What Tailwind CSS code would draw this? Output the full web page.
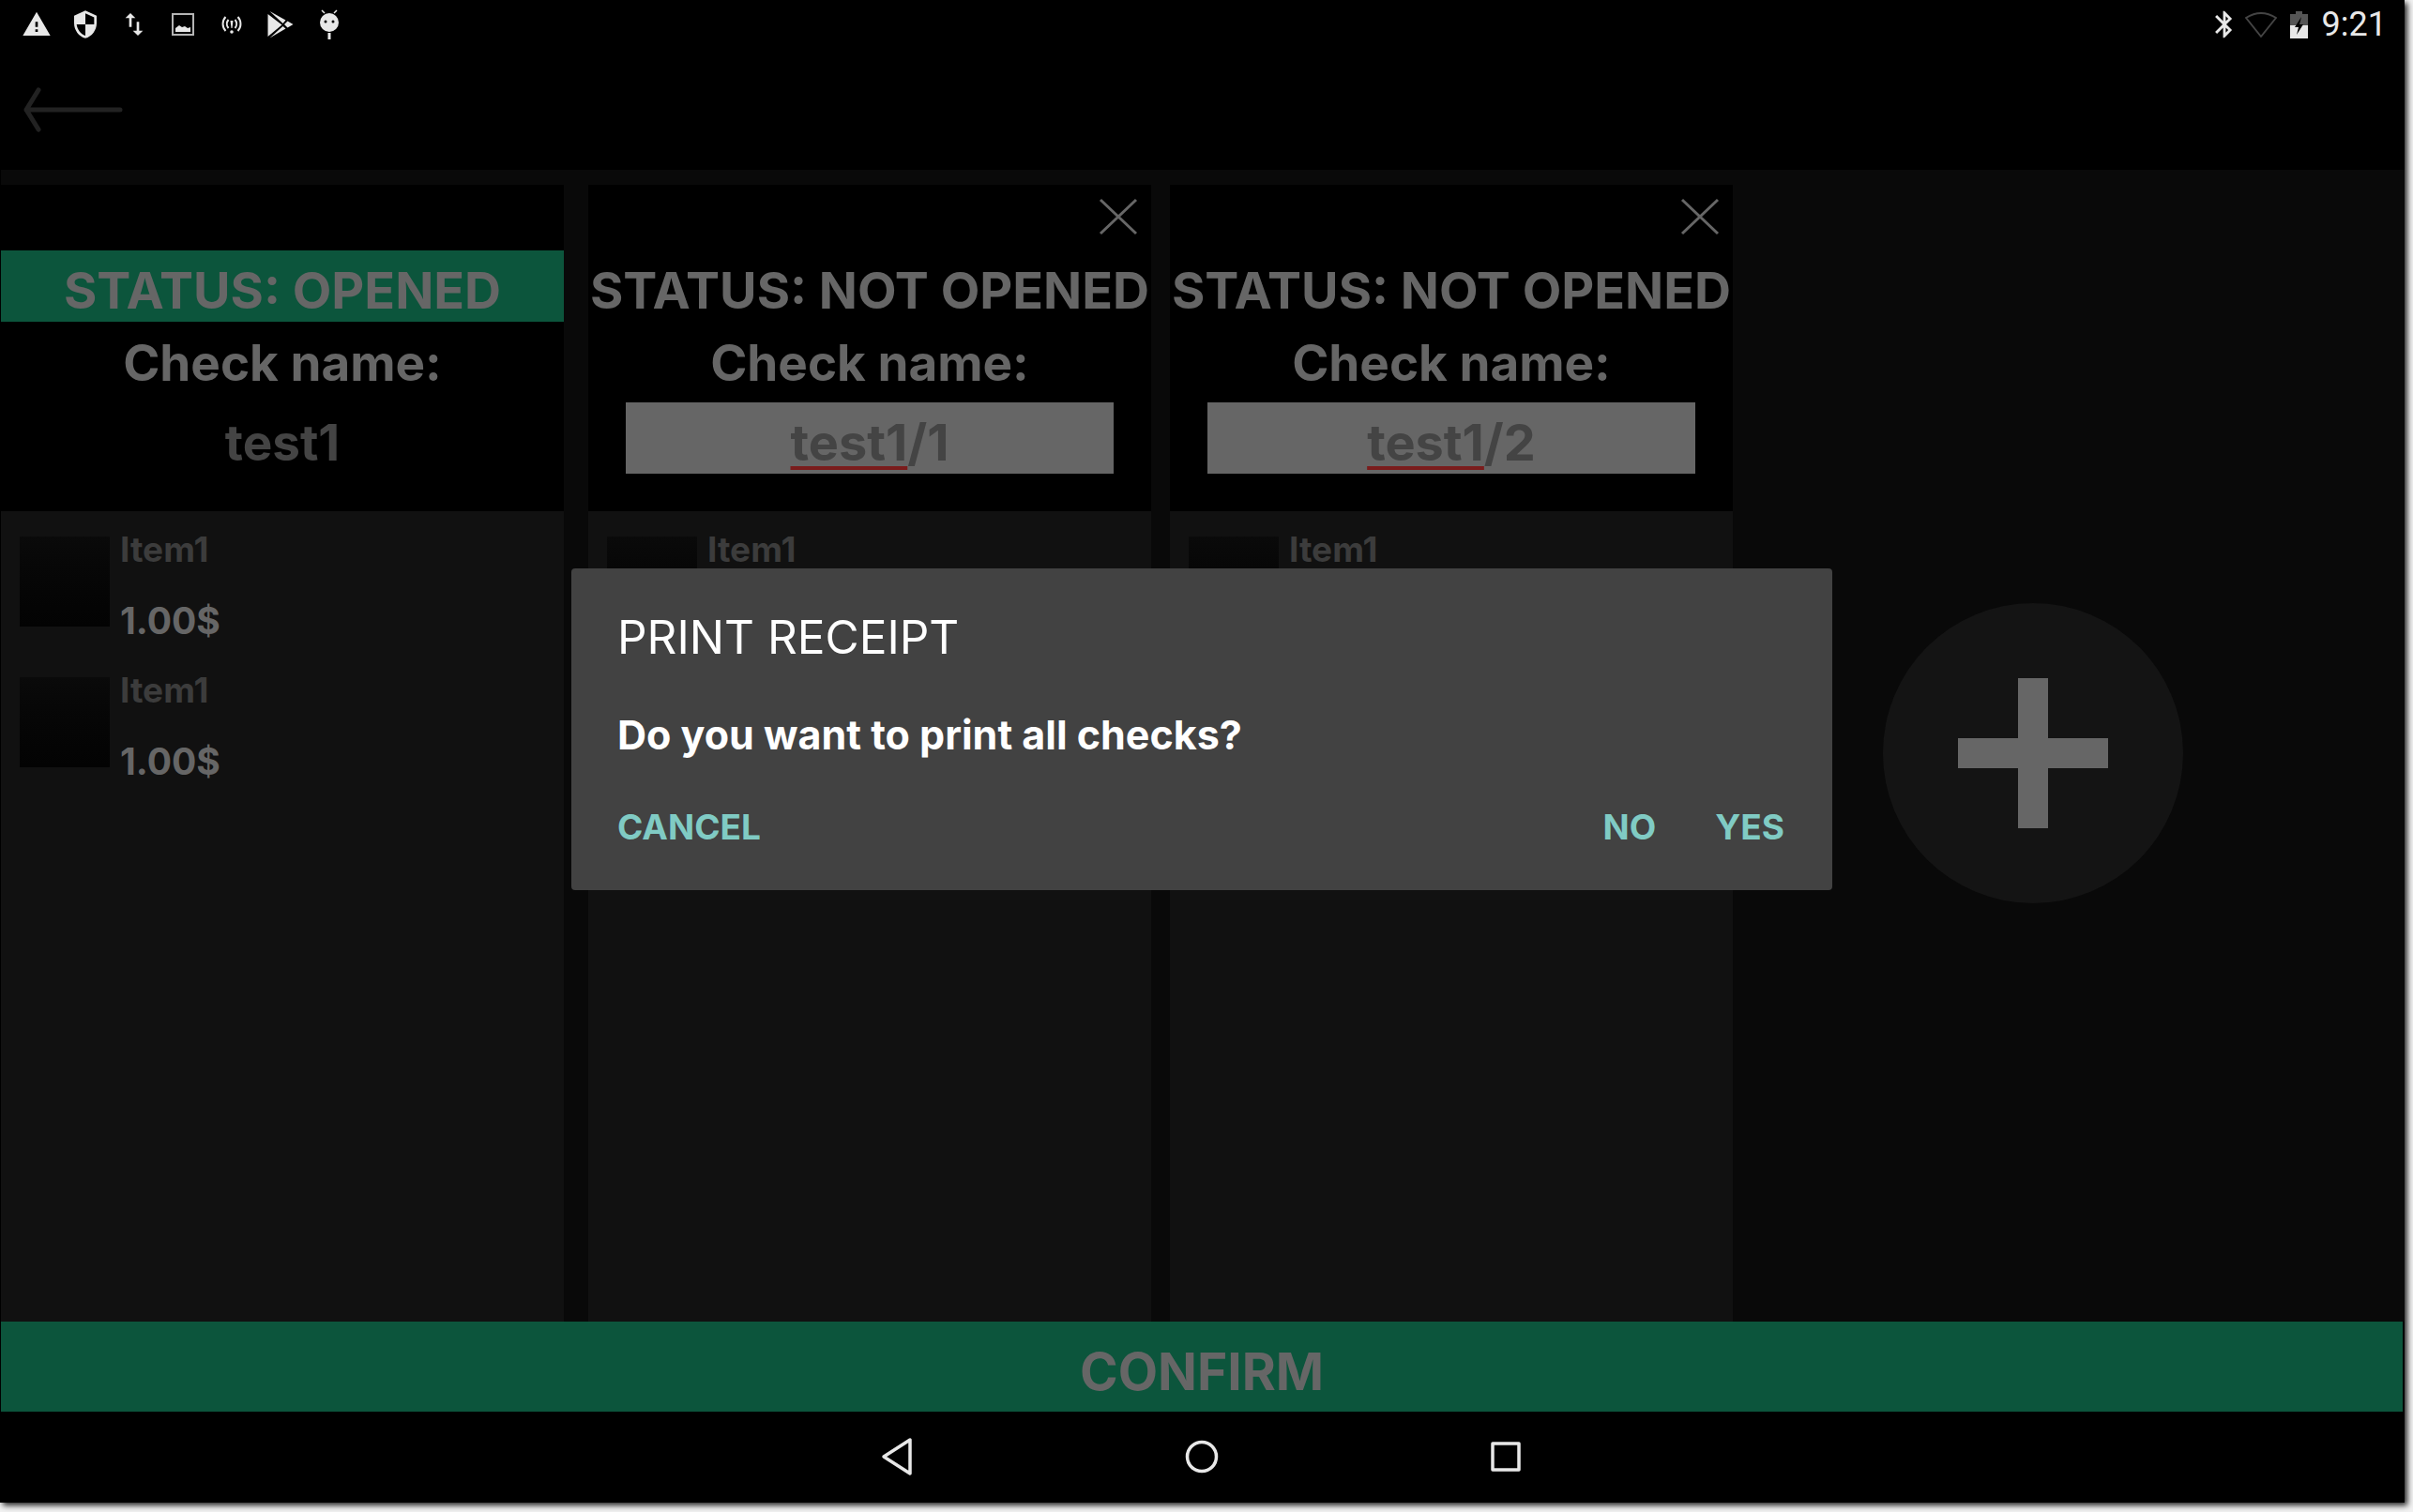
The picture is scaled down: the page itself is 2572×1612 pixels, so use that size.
<!DOCTYPE html>
<html lang="en">
<head>
  <meta charset="UTF-8" />
  <title>Split check</title>
  <script src="https://cdn.jsdelivr.net/npm/@tailwindcss/browser@4"></script>
</head>
<body class="bg-[#f2f2f2] w-[2572px] h-[1612px] overflow-hidden font-['Inter',sans-serif]">
  <div class="relative w-[2563px] h-[1602px] bg-black flex flex-col shadow-[3px_3px_6px_rgba(0,0,0,0.85)]">

    <!-- status bar -->
    <div class="h-[52px] shrink-0 flex items-center justify-between pl-[23px] pr-[19px]">
      <div class="flex items-center gap-[20px]">
        <svg class="w-[32px] h-[32px]" viewBox="0 0 24 24" fill="#e8e8e8"><path fill-rule="evenodd" d="M1 21h22L12 2 1 21zm12-3h-2v-2h2v2zm0-4h-2v-4h2v4z"/></svg>
        <svg class="w-[32px] h-[32px]" viewBox="0 0 24 24" fill="#e8e8e8"><path transform="translate(24 0) scale(-1 1)" d="M12 1L3 5v6c0 5.55 3.84 10.74 9 12 5.16-1.26 9-6.45 9-12V5l-9-4zm0 10.99h7c-.53 4.12-3.28 7.79-7 8.94V12H5V6.3l7-3.11v8.8z"/></svg>
        <svg class="w-[32px] h-[32px]" viewBox="0 0 24 24" fill="#e8e8e8"><path d="M16 17.01V10h-2v7.01h-3L15 21l4-3.99h-3zM9 3L5 6.99h3V14h2V6.99h3L9 3z"/></svg>
        <svg class="w-[32px] h-[32px]" viewBox="0 0 32 32"><rect x="5" y="5" width="22" height="22" fill="none" stroke="#b4b4b4" stroke-width="2"/><path d="M8 24v-4l4-3 3 2 3-1 3 2 3-1v5z" fill="#e8e8e8"/></svg>
        <svg class="w-[32px] h-[32px]" viewBox="0 0 32 32" fill="none" stroke="#e8e8e8" stroke-width="2"><path d="M9.500 8a11 11 0 0 0 0 15M22.500 8a11 11 0 0 1 0 15M12.500 11a7 7 0 0 0 0 9M19.500 11a7 7 0 0 1 0 9"/><path d="M14.500 12h3l-1 8h-1z" fill="#e8e8e8" stroke="none"/><circle cx="16" cy="24" r="1.800" fill="#e8e8e8" stroke="none"/></svg>
        <svg class="w-[32px] h-[32px]" viewBox="-2.500 -2 32 32" fill="#e8e8e8"><path d="M0 3V27L15 14.500z"/><path d="M2 0L19 9.500 16 13z"/><path d="M21 10.500L27 14 21 17.500 17.500 14z"/><path d="M2 28.500L16 16 19 18.500z"/></svg>
        <svg class="w-[32px] h-[32px]" viewBox="0 0 32 32"><circle cx="16" cy="14" r="10" fill="#e8e8e8"/><circle cx="12" cy="13" r="1.500" fill="#000"/><circle cx="20" cy="13" r="1.500" fill="#000"/><path d="M8 1l3 3M24 1l-3 3" stroke="#e8e8e8" stroke-width="1.500"/><rect x="14.500" y="25" width="3" height="7" fill="#e8e8e8"/></svg>
      </div>
      <div class="flex items-center">
        <svg class="w-[34px] h-[34px]" viewBox="0 0 24 24" fill="#e8e8e8"><path d="M17.710 7.710L12 2h-1v7.590L6.410 5 5 6.410 10.590 12 5 17.590 6.410 19 11 14.410V22h1l5.710-5.710-4.300-4.290 4.300-4.290zM13 5.830l1.880 1.880L13 9.590V5.830zm1.880 10.460L13 18.170v-3.760l1.880 1.880z"/></svg>
        <svg class="ml-[4px] w-[36px] h-[29px]" viewBox="0 0 36 29" fill="none" stroke="#444" stroke-width="2"><path d="M2 7Q18 -3 34 7L18 27z" stroke-linejoin="round"/></svg>
        <svg class="ml-[13px] w-[19px] h-[29px]" viewBox="0 0 19 29"><path d="M6 0h7v3h6v12H0V3h6z" fill="#555"/><path d="M0 15h19v14H0z" fill="#e8e8e8"/><path d="M12 6L5 17h4l-2 8 7-11h-4z" fill="#000"/></svg>
        <span class="ml-[15px] font-['Roboto',sans-serif] text-[36px] leading-none text-[#e8e8e8]">9:21</span>
      </div>
    </div>

    <!-- toolbar -->
    <div class="h-[129px] shrink-0 pl-[25px] pt-[41px]">
      <svg class="w-[106px] h-[48px]" viewBox="0 0 106 48" fill="none" stroke="#222" stroke-width="5" stroke-linecap="round" stroke-linejoin="round"><path d="M103 24H3M16 3L3 24 16 45"/></svg>
    </div>

    <!-- checks -->
    <div class="flex-1 min-h-0 ml-px bg-[#090909] pt-[16px] flex">
      <div class="w-[600px] flex flex-col">
        <div class="relative h-[348px] shrink-0 bg-black flex flex-col items-center pt-[70px] text-[#666] font-bold text-[53px] leading-[64px]">
          <div class="w-full h-[76px] shrink-0 bg-[#0c553c] pt-[10px] flex items-center justify-center text-[54px] whitespace-nowrap">STATUS: OPENED</div>
          <div class="h-[86px] shrink-0 pt-[2px] flex items-center">Check name:</div>
          <div class="w-[520px] h-[76px] shrink-0 pt-[10px] flex items-center justify-center text-[#444]">test1</div>
        </div>
        <div class="flex-1 bg-[#111] pt-[27px] pl-[20px]">
          <div class="h-[150px] flex gap-[11px]">
            <div class="w-[96px] h-[96px] bg-gradient-to-b from-[#0a0a0a] to-[#030303]"></div>
            <div class="font-bold -mt-[6px]">
              <div class="h-[76px] text-[37px] leading-[40px] text-[#3c3c3c]">Item1</div>
              <div class="text-[39px] leading-[40px] text-[#666]">1.00$</div>
            </div>
          </div>
          <div class="h-[150px] flex gap-[11px]">
            <div class="w-[96px] h-[96px] bg-gradient-to-b from-[#0a0a0a] to-[#030303]"></div>
            <div class="font-bold -mt-[6px]">
              <div class="h-[76px] text-[37px] leading-[40px] text-[#3c3c3c]">Item1</div>
              <div class="text-[39px] leading-[40px] text-[#666]">1.00$</div>
            </div>
          </div>
        </div>
      </div>

      <div class="ml-[26px] w-[600px] flex flex-col">
        <div class="relative h-[348px] shrink-0 bg-black flex flex-col items-center pt-[70px] text-[#666] font-bold text-[53px] leading-[64px]">
          <svg class="absolute right-[14px] top-[14px] w-[42px] h-[40px]" viewBox="0 0 42 40" stroke="#666" stroke-width="3"><path d="M2 2L40 38M40 2L2 38"/></svg>
          <div class="w-full h-[76px] shrink-0 pt-[10px] flex items-center justify-center text-[54px] whitespace-nowrap">STATUS: NOT OPENED</div>
          <div class="h-[86px] shrink-0 pt-[2px] flex items-center">Check name:</div>
          <div class="w-[520px] h-[76px] shrink-0 bg-[#666] pt-[10px] flex items-center justify-center text-[54px] text-[#444]"><span><span class="underline decoration-[#7a1c1c] decoration-[4px] underline-offset-[6px]">test1</span>/1</span></div>
        </div>
        <div class="flex-1 bg-[#111] pt-[27px] pl-[20px]">
          <div class="h-[150px] flex gap-[11px]">
            <div class="w-[96px] h-[96px] bg-gradient-to-b from-[#0a0a0a] to-[#030303]"></div>
            <div class="font-bold -mt-[6px]">
              <div class="h-[76px] text-[37px] leading-[40px] text-[#3c3c3c]">Item1</div>
              <div class="text-[39px] leading-[40px] text-[#666]">1.00$</div>
            </div>
          </div>
        </div>
      </div>

      <div class="ml-[20px] w-[600px] flex flex-col">
        <div class="relative h-[348px] shrink-0 bg-black flex flex-col items-center pt-[70px] text-[#666] font-bold text-[53px] leading-[64px]">
          <svg class="absolute right-[14px] top-[14px] w-[42px] h-[40px]" viewBox="0 0 42 40" stroke="#666" stroke-width="3"><path d="M2 2L40 38M40 2L2 38"/></svg>
          <div class="w-full h-[76px] shrink-0 pt-[10px] flex items-center justify-center text-[54px] whitespace-nowrap">STATUS: NOT OPENED</div>
          <div class="h-[86px] shrink-0 pt-[2px] flex items-center">Check name:</div>
          <div class="w-[520px] h-[76px] shrink-0 bg-[#666] pt-[10px] flex items-center justify-center text-[54px] text-[#444]"><span><span class="underline decoration-[#7a1c1c] decoration-[4px] underline-offset-[6px]">test1</span>/2</span></div>
        </div>
        <div class="flex-1 bg-[#111] pt-[27px] pl-[20px]">
          <div class="h-[150px] flex gap-[11px]">
            <div class="w-[96px] h-[96px] bg-gradient-to-b from-[#0a0a0a] to-[#030303]"></div>
            <div class="font-bold -mt-[6px]">
              <div class="h-[76px] text-[37px] leading-[40px] text-[#3c3c3c]">Item1</div>
              <div class="text-[39px] leading-[40px] text-[#666]">1.00$</div>
            </div>
          </div>
        </div>
      </div>

      <div class="ml-[160px] mt-[446px] w-[320px] h-[320px] rounded-full bg-[#141414] flex items-center justify-center">
        <svg class="w-[160px] h-[160px]" viewBox="0 0 160 160" fill="#666"><path d="M64 0h32v64h64v32H96v64H64V96H0V64h64z"/></svg>
      </div>
    </div>

    <!-- confirm -->
    <div class="h-[96px] shrink-0 ml-px mr-[2px] bg-[#0c553c] flex items-center justify-center pt-[10px] text-[55px] leading-[64px] font-bold text-[#666]">CONFIRM</div>

    <!-- nav bar -->
    <div class="relative h-[97px] shrink-0">
      <svg class="absolute left-[938px] top-[27px] w-[36px] h-[42px]" viewBox="0 0 36 42" fill="none" stroke="#e8e8e8" stroke-width="3.500" stroke-linejoin="round"><path d="M32 3V39L4 21z"/></svg>
      <svg class="absolute left-[1263px] top-[30px] w-[36px] h-[36px]" viewBox="0 0 36 36" fill="none" stroke="#e8e8e8" stroke-width="3.500"><circle cx="18" cy="18" r="15.500"/></svg>
      <svg class="absolute left-[1588px] top-[31px] w-[34px] h-[34px]" viewBox="0 0 34 34" fill="none" stroke="#e8e8e8" stroke-width="3.500" stroke-linejoin="round"><rect x="3" y="3" width="28" height="28"/></svg>
    </div>

    <!-- print dialog -->
    <div class="absolute left-[609px] top-[606px] w-[1344px] h-[343px] bg-[#424242] rounded-[4px] flex flex-col px-[49px]">
      <div class="pt-[43px] text-[49.5px] leading-[60px] text-white">PRINT RECEIPT</div>
      <div class="mt-[48px] text-[43px] leading-[52px] font-bold text-white">Do you want to print all checks?</div>
      <div class="mt-[49px] flex items-center text-[37px] leading-[48px] font-bold text-[#80cbc4]">
        <span>CANCEL</span>
        <span class="ml-auto">NO</span>
        <span class="ml-[63px] mr-[2px]">YES</span>
      </div>
    </div>
  </div>
</body>
</html>
